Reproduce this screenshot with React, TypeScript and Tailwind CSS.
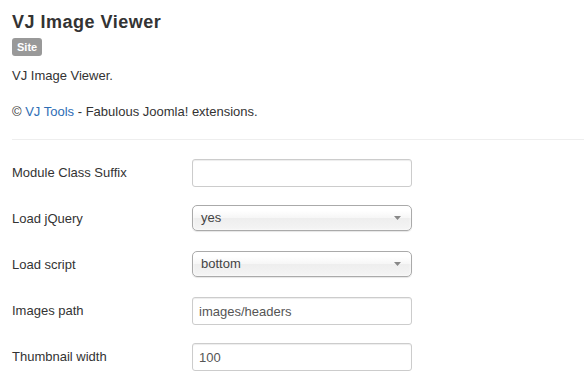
const fields = [
  { label: 'Module Class Suffix', type: 'text', value: '' },
  { label: 'Load jQuery', type: 'select', value: 'yes' },
  { label: 'Load script', type: 'select', value: 'bottom' },
  { label: 'Images path', type: 'text', value: 'images/headers' },
  { label: 'Thumbnail width', type: 'text', value: '100' },
];

function FakeSelect({ value }: { value: string }) {
  return (
    <div className="h-[26px] w-[220px] flex items-center justify-between pl-2 pr-[10px] border border-[#aaa] rounded-[5px] text-[#444] bg-[linear-gradient(#fff_20%,#f6f6f6_50%,#eee_52%,#f4f4f4_100%)] shadow-[inset_0_0_3px_#fff,0_1px_1px_rgba(0,0,0,0.1)]">
      <span>{value}</span>
      <svg width="7" height="4" viewBox="0 0 7 4">
        <path d="M0 0h7L3.5 4z" fill="#888" />
      </svg>
    </div>
  );
}

export default function App() {
  return (
    <div
      className="w-[584px] min-h-[379px] bg-white text-[13px] leading-[18px] text-[#333]"
      style={{ fontFamily: '"Liberation Sans", Arial, sans-serif' }}
    >
      <div className="pl-3 pt-[10px]">
        <h3 className="text-[18px] leading-[24px] font-bold tracking-[0.5px]">VJ Image Viewer</h3>
        <div className="mt-1 flex">
          <span className="h-[18px] px-[5px] rounded-[3px] bg-[#999] text-white text-[11px] font-bold leading-[18px]">
            Site
          </span>
        </div>
        <p className="mt-[11px]">VJ Image Viewer.</p>
        <p className="mt-[18px]">
          © <a href="#" className="text-[#2d6db5]">VJ Tools</a> - Fabulous Joomla! extensions.
        </p>
        <hr className="mt-[18px] border-0 border-t border-[#eee]" />
      </div>

      <div className="pl-3 pt-[19px] flex flex-col gap-[18px]">
        {fields.map((f) => (
          <div key={f.label} className="flex h-[28px]">
            <label className="w-[180px] flex items-center">{f.label}</label>
            {f.type === 'select' ? (
              <FakeSelect value={f.value} />
            ) : (
              <input
                type="text"
                defaultValue={f.value}
                className="h-[28px] w-[220px] px-[6px] border border-[#ccc] rounded-[3px] text-[#555] shadow-[inset_0_1px_1px_rgba(0,0,0,0.075)] outline-none"
              />
            )}
          </div>
        ))}
      </div>
    </div>
  );
}
